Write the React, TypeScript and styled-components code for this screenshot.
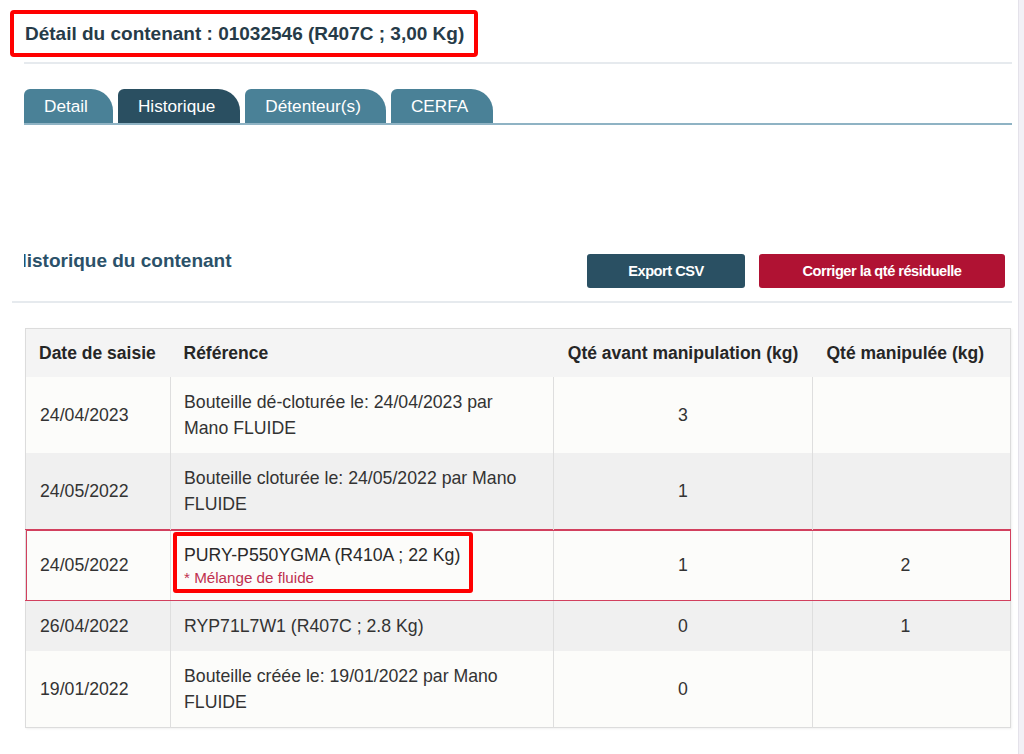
import React from "react";
import styled, {createGlobalStyle, css} from "styled-components";

type Row = {
    date: string
    reference: string[]
    avant: string
    manipulee: string
    melange?: boolean
    shade: "light" | "grey"
}

const rows: Row[] = [
    {date: "24/04/2023", reference: ["Bouteille dé-cloturée le: 24/04/2023 par", "Mano FLUIDE"], avant: "3", manipulee: "", shade: "light"},
    {date: "24/05/2022", reference: ["Bouteille cloturée le: 24/05/2022 par Mano", "FLUIDE"], avant: "1", manipulee: "", shade: "grey"},
    {date: "24/05/2022", reference: ["PURY-P550YGMA (R410A ; 22 Kg)"], avant: "1", manipulee: "2", melange: true, shade: "light"},
    {date: "26/04/2022", reference: ["RYP71L7W1 (R407C ; 2.8 Kg)"], avant: "0", manipulee: "1", shade: "grey"},
    {date: "19/01/2022", reference: ["Bouteille créée le: 19/01/2022 par Mano", "FLUIDE"], avant: "0", manipulee: "", shade: "light"},
]

const tabs = ["Detail", "Historique", "Détenteur(s)", "CERFA"]

const App = () => {
    return (
        <>
            <GlobalStyle/>
            <Page>
                <Main>
                    <TitleBox>Détail du contenant : 01032546 (R407C ; 3,00 Kg)</TitleBox>
                    <Rule/>
                    <TabBar>
                        {tabs.map(tab => (
                            <Tab key={tab} $active={tab === "Historique"}>{tab}</Tab>
                        ))}
                    </TabBar>

                    <SectionHead>
                        <HeadClip>
                            <SectionTitle>Historique du contenant</SectionTitle>
                        </HeadClip>
                        <Actions>
                            <Button $variant="dark">Export CSV</Button>
                            <Button $variant="red">Corriger la qté résiduelle</Button>
                        </Actions>
                    </SectionHead>
                    <WideRule/>

                    <Table>
                        <colgroup>
                            <col style={{width: 145}}/>
                            <col style={{width: 383}}/>
                            <col style={{width: 259}}/>
                            <col style={{width: 198}}/>
                        </colgroup>
                        <thead>
                        <tr>
                            <Th>Date de saisie</Th>
                            <Th>Référence</Th>
                            <Th $center>Qté avant manipulation (kg)</Th>
                            <Th $center>Qté manipulée (kg)</Th>
                        </tr>
                        </thead>
                        <tbody>
                        {rows.map((row, i) => (
                            <Tr key={i} $shade={row.shade} $alert={row.melange}>
                                <Td>{row.date}</Td>
                                <Td>
                                    {row.melange ? (
                                        <Highlight>
                                            {row.reference[0]}
                                            <Melange>* Mélange de fluide</Melange>
                                        </Highlight>
                                    ) : row.reference.map((line, j) => <div key={j}>{line}</div>)}
                                </Td>
                                <Td $center>{row.avant}</Td>
                                <Td $center>{row.manipulee}</Td>
                            </Tr>
                        ))}
                        </tbody>
                    </Table>
                </Main>
                <ScrollStrip/>
            </Page>
        </>
    )
}

export default App;

// Styled Components
const GlobalStyle = createGlobalStyle`
  html, body {
    margin: 0;
    padding: 0;
    background: #ffffff;
  }
  body {
    font-family: "Liberation Sans", Arial, sans-serif;
    color: #333333;
  }
`

const Page = styled.div`
  display: flex;
  min-height: 754px;
  overflow: hidden;
`

const Main = styled.div`
  flex: 1;
  padding: 10px 6px 0 24px;
  display: flex;
  flex-direction: column;
  align-items: flex-start;
`

const ScrollStrip = styled.div`
  width: 5px;
  background: #f2f0f6;
  border-left: 1px solid #e4e2ea;
`

const TitleBox = styled.h1`
  margin: 0 0 0 -14px;
  padding: 8px 10px 8px 11px;
  border: 4px solid #ff0000;
  border-radius: 4px;
  font-size: 19px;
  line-height: 23px;
  font-weight: bold;
  color: #263b48;
`

const Rule = styled.div`
  align-self: stretch;
  height: 2px;
  margin-top: 5px;
  background: #e6eaee;
`

const TabBar = styled.div`
  align-self: stretch;
  display: flex;
  gap: 5px;
  margin-top: 25px;
  border-bottom: 2px solid #8fb3c4;
`

const Tab = styled.div<{ $active?: boolean }>`
  height: 34px;
  padding: 0 25px 0 20px;
  display: flex;
  align-items: center;
  font-size: 17.2px;
  color: #ffffff;
  background: ${p => p.$active ? "#2a4f61" : "#4a8197"};
  border-radius: 6px 22px 0 0;
`

const SectionHead = styled.div`
  align-self: stretch;
  display: flex;
  justify-content: space-between;
  align-items: flex-start;
  margin-top: 125px;
`

const HeadClip = styled.div`
  overflow: hidden;
`

const SectionTitle = styled.h2`
  margin: 0 0 0 -11px;
  font-size: 19px;
  line-height: 22px;
  font-weight: bold;
  color: #2b5169;
`

const Actions = styled.div`
  display: flex;
  gap: 14px;
  margin: 4px 7px 0 0;
`

const Button = styled.button<{ $variant: "dark" | "red" }>`
  height: 34px;
  border: none;
  border-radius: 3px;
  font-family: "Liberation Sans", Arial, sans-serif;
  font-size: 14.6px;
  font-weight: bold;
  letter-spacing: -0.5px;
  color: #ffffff;
  cursor: pointer;
  ${p => p.$variant === "dark" ? css`
    width: 158px;
    background: #2a5063;
  ` : css`
    width: 246px;
    background: #b01233;
  `}
`

const WideRule = styled.div`
  align-self: stretch;
  height: 2px;
  margin: 13px 0 0 -12px;
  background: #e6eaee;
`

const Table = styled.table`
  margin: 25px 0 0 1px;
  width: 985px;
  border-collapse: collapse;
  table-layout: fixed;
  border: 1px solid #dcdcdc;
  box-shadow: 1px 1px 2px rgba(0, 0, 0, 0.06);
  font-size: 17.7px;
`

const Th = styled.th<{ $center?: boolean }>`
  padding: 12px 13px;
  line-height: 24px;
  font-size: 17.5px;
  font-weight: bold;
  color: #262626;
  background: #f4f4f4;
  text-align: ${p => p.$center ? "center" : "left"};
  white-space: nowrap;
  &:last-child {
    padding-right: 25px;
  }
`

const Tr = styled.tr<{ $shade: "light" | "grey", $alert?: boolean }>`
  background: ${p => p.$shade === "grey" ? "#f0f0f0" : "#fcfcfa"};
  ${p => p.$alert && css`
    outline: 1px solid #d2405e;
    outline-offset: -1px;
    & > td {
      border-top: 1px solid #d2405e;
      border-bottom: 1px solid #d2405e;
    }
  `}
`

const Td = styled.td<{ $center?: boolean }>`
  padding: 12px 13px;
  line-height: 26px;
  color: #333333;
  vertical-align: middle;
  text-align: ${p => p.$center ? "center" : "left"};
  border-left: 1px solid #dedede;
  &:first-child {
    border-left: none;
    padding-left: 14px;
  }
  &:last-child {
    padding-right: 25px;
  }
`

const Highlight = styled.div`
  width: fit-content;
  margin: -10px 0 -5px -11px;
  padding: 6px 9px 1px 7px;
  border: 4px solid #ff0000;
  border-radius: 3px;
  color: #2a2a2a;
`

const Melange = styled.div`
  font-size: 15.2px;
  line-height: 20px;
  color: #c0304f;
`
